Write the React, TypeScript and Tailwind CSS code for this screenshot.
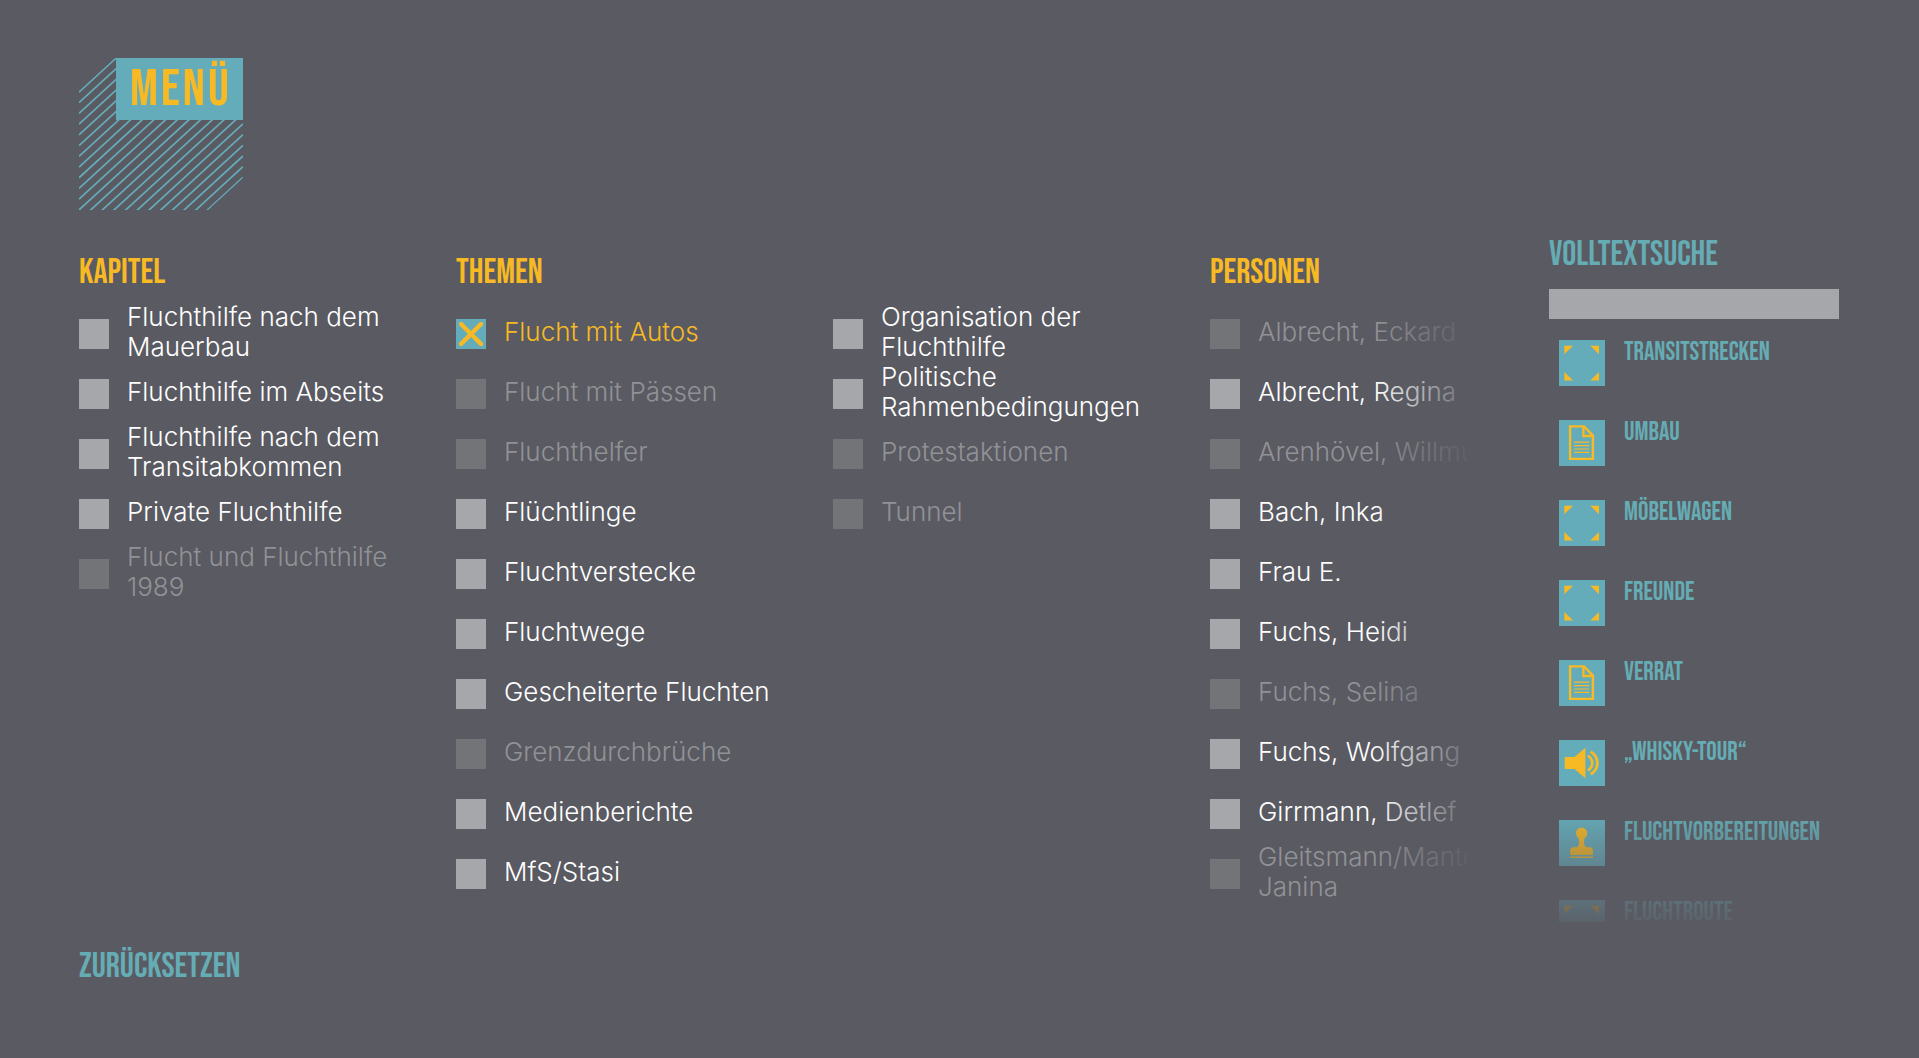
import * as React from "react";
import clsx from "clsx";

interface IFilter {
  label: string;
  disabled?: boolean;
}

interface IResult {
  title: string;
  type: "gallery" | "text" | "audio" | "stamp";
}

const chapters: IFilter[] = [
  { label: "Fluchthilfe nach dem Mauerbau" },
  { label: "Fluchthilfe im Abseits" },
  { label: "Fluchthilfe nach dem Transitabkommen" },
  { label: "Private Fluchthilfe" },
  { label: "Flucht und Fluchthilfe 1989", disabled: true },
];

const topics: IFilter[] = [
  { label: "Flucht mit Autos" },
  { label: "Flucht mit Pässen", disabled: true },
  { label: "Fluchthelfer", disabled: true },
  { label: "Flüchtlinge" },
  { label: "Fluchtverstecke" },
  { label: "Fluchtwege" },
  { label: "Gescheiterte Fluchten" },
  { label: "Grenzdurchbrüche", disabled: true },
  { label: "Medienberichte" },
  { label: "MfS/Stasi" },
  { label: "Organisation der Fluchthilfe" },
  { label: "Politische Rahmenbedingungen" },
  { label: "Protestaktionen", disabled: true },
  { label: "Tunnel", disabled: true },
];

const persons: IFilter[] = [
  { label: "Albrecht, Eckard", disabled: true },
  { label: "Albrecht, Regina" },
  { label: "Arenhövel, Willmuth", disabled: true },
  { label: "Bach, Inka" },
  { label: "Frau E." },
  { label: "Fuchs, Heidi" },
  { label: "Fuchs, Selina", disabled: true },
  { label: "Fuchs, Wolfgang" },
  { label: "Girrmann, Detlef" },
  { label: "Gleitsmann/Mantei, Janina", disabled: true },
];

const results: IResult[] = [
  { title: "Transitstrecken", type: "gallery" },
  { title: "Umbau", type: "text" },
  { title: "Möbelwagen", type: "gallery" },
  { title: "Freunde", type: "gallery" },
  { title: "Verrat", type: "text" },
  { title: "„Whisky-Tour“", type: "audio" },
  { title: "Fluchtvorbereitungen", type: "stamp" },
  { title: "Fluchtroute", type: "gallery" },
];

const icons = {
  gallery: (
    <path
      fill="currentColor"
      d="M5.3 5.7H14L5.3 14.3zM31.3 5.7H40V14.3zM5.3 32V40.5H14zM40 32V40.5H31.3z"
    />
  ),
  text: (
    <g fill="none" stroke="currentColor">
      <path strokeWidth="2.4" d="M11.1 6.4H25L33.9 15.4V38.9H11.1z" />
      <path strokeWidth="2.4" d="M24.4 6.4V16H33.9" />
      <path strokeWidth="1.2" d="M15 22.2H30.3M15 25.6H30.3M15 29H30.3M15 32.4H30.3" />
    </g>
  ),
  audio: (
    <g>
      <path fill="currentColor" d="M5.7 17H15.5L26.4 7.7V38.3L15.5 29H5.7z" />
      <g fill="none" stroke="currentColor" strokeWidth="2.8">
        <path d="M28.8 15.6Q33.2 18.3 33.2 23T28.8 30.4" />
        <path d="M31.7 11.7Q38.4 15.8 38.4 23T31.7 34.3" />
      </g>
    </g>
  ),
  stamp: (
    <path
      fill="currentColor"
      d="M22.6 7.8C26 7.8 28.2 10.2 28.2 13.2C28.2 16.4 25 18 25 21.2C25 24.2 26 27.2 28 27.2H31C33 27.2 34 28.8 34 31V35H11.2V31C11.2 28.8 12.2 27.2 14.2 27.2H17.4C19.4 27.2 20.2 24.2 20.2 21.2C20.2 18 17 16.4 17 13.2C17 10.2 19.2 7.8 22.6 7.8zM11.2 36.6H34V38H11.2z"
    />
  ),
};

const heading =
  "text-[35px] leading-9 uppercase font-['Bebas_Neue','Open_Sans_Condensed',sans-serif]";

const Logo = () => {
  const lines = Array.from({ length: 24 }, (_, i) => i);
  return (
    <div className="relative w-[164px] h-[152px]">
      <svg className="absolute inset-0" width="164" height="152" viewBox="0 0 164 152">
        <clipPath id="block">
          <path d="M0 33L37 -1H164V120L129 152H0z" />
        </clipPath>
        <g clipPath="url(#block)" stroke="#65acba" strokeWidth="1.7">
          {lines.map((i) => (
            <line key={i} x1="0" y1={34 + i * 10.72} x2="164" y2={34 + i * 10.72 - 150.4} />
          ))}
        </g>
      </svg>
      <button
        type="button"
        className="relative flex items-center justify-center ml-[37px] w-[127px] h-[62px] bg-[#65acba] text-[#f7b924] text-[52px] leading-none tracking-[3px] pt-0.5 pl-[3px] uppercase font-['Bebas_Neue','Open_Sans_Condensed',sans-serif]"
      >
        Menü
      </button>
    </div>
  );
};

const Filter = ({ label, disabled }: IFilter) => {
  const [checked, setChecked] = React.useState(label === "Flucht mit Autos");

  return (
    <li className="h-[60px]">
      <label className="flex items-center h-full gap-[18px] pr-8">
        <span className="grid shrink-0">
          <input
            type="checkbox"
            className="col-start-1 row-start-1 appearance-none size-[30px] bg-[#a6a7aa] checked:bg-[#65acba] disabled:bg-[#737478]"
            checked={checked}
            disabled={disabled}
            onChange={(e) => setChecked(e.target.checked)}
          />
          {checked && (
            <svg
              className="col-start-1 row-start-1 place-self-center pointer-events-none"
              width="24"
              height="24"
              viewBox="0 0 24 24"
            >
              <path
                d="M2 2L22 22M22 2L2 22"
                stroke="#f7b924"
                strokeWidth="4.4"
                strokeLinecap="round"
              />
            </svg>
          )}
        </span>
        <span
          className={clsx(
            "text-[26px] leading-[30px] font-light pb-1",
            checked ? "text-[#f7b924]" : disabled ? "text-[#919296]" : "text-white"
          )}
        >
          {label}
        </span>
      </label>
    </li>
  );
};

const FilterGroup = ({ title, items }: { title: string; items: IFilter[] }) => {
  return (
    <section className="shrink-0">
      <h2 className={clsx(heading, "text-[#f7b924] mb-[13px]")}>{title}</h2>
      <ul className="grid grid-flow-col grid-rows-[repeat(10,60px)] auto-cols-[377px]">
        {items.map((item) => (
          <Filter key={item.label} {...item} />
        ))}
      </ul>
    </section>
  );
};

const Result = ({ title, type }: IResult) => {
  return (
    <li className="h-20">
      <a href="#" className="flex items-start gap-[19px]">
        <svg
          className="shrink-0 bg-[#65acba] text-[#f7b924]"
          width="46"
          height="46"
          viewBox="0 0 46 46"
        >
          {icons[type]}
        </svg>
        <span className="text-[26px] leading-[26px] text-[#65acb4] uppercase whitespace-nowrap font-['Bebas_Neue','Open_Sans_Condensed',sans-serif]">
          {title}
        </span>
      </a>
    </li>
  );
};

export default function App() {
  const [query, setQuery] = React.useState("");

  return (
    <div className="min-h-screen bg-[#5a5a62] px-20 pt-[58px] pb-16 font-['Inter','Liberation_Sans',sans-serif]">
      <div className="-ml-px">
        <Logo />
        <div className="flex items-start gap-[82px] mt-[27px]">
          <main className="relative flex-1 min-w-0 overflow-hidden pt-[18px] pb-5">
            <div className="flex">
              <FilterGroup title="Kapitel" items={chapters} />
              <FilterGroup title="Themen" items={topics} />
              <FilterGroup title="Personen" items={persons} />
            </div>
            <div className="absolute inset-y-0 right-0 w-[94px] bg-linear-to-r from-[#5a5a62]/0 to-[#5a5a62]/90 pointer-events-none" />
          </main>
          <aside className="w-[290px] shrink-0">
            <label htmlFor="search" className={clsx(heading, "block text-[#65acb4]")}>
              Volltextsuche
            </label>
            <input
              id="search"
              type="text"
              className="block w-full h-[30px] mt-4 px-2 bg-[#a6a7aa] text-white outline-none"
              value={query}
              onChange={(e) => setQuery(e.target.value)}
            />
            <div className="relative h-[582px] mt-[21px] pl-2.5 overflow-hidden">
              <ul>
                {results.map((item) => (
                  <Result key={item.title} {...item} />
                ))}
              </ul>
              <div className="absolute inset-x-0 bottom-0 h-[116px] bg-linear-to-b from-[#5a5a62]/0 to-[#5a5a62]/90 pointer-events-none" />
            </div>
          </aside>
        </div>
        <button type="button" className={clsx(heading, "text-[#65acb4] mt-[25px]")}>
          Zurücksetzen
        </button>
      </div>
    </div>
  );
}
